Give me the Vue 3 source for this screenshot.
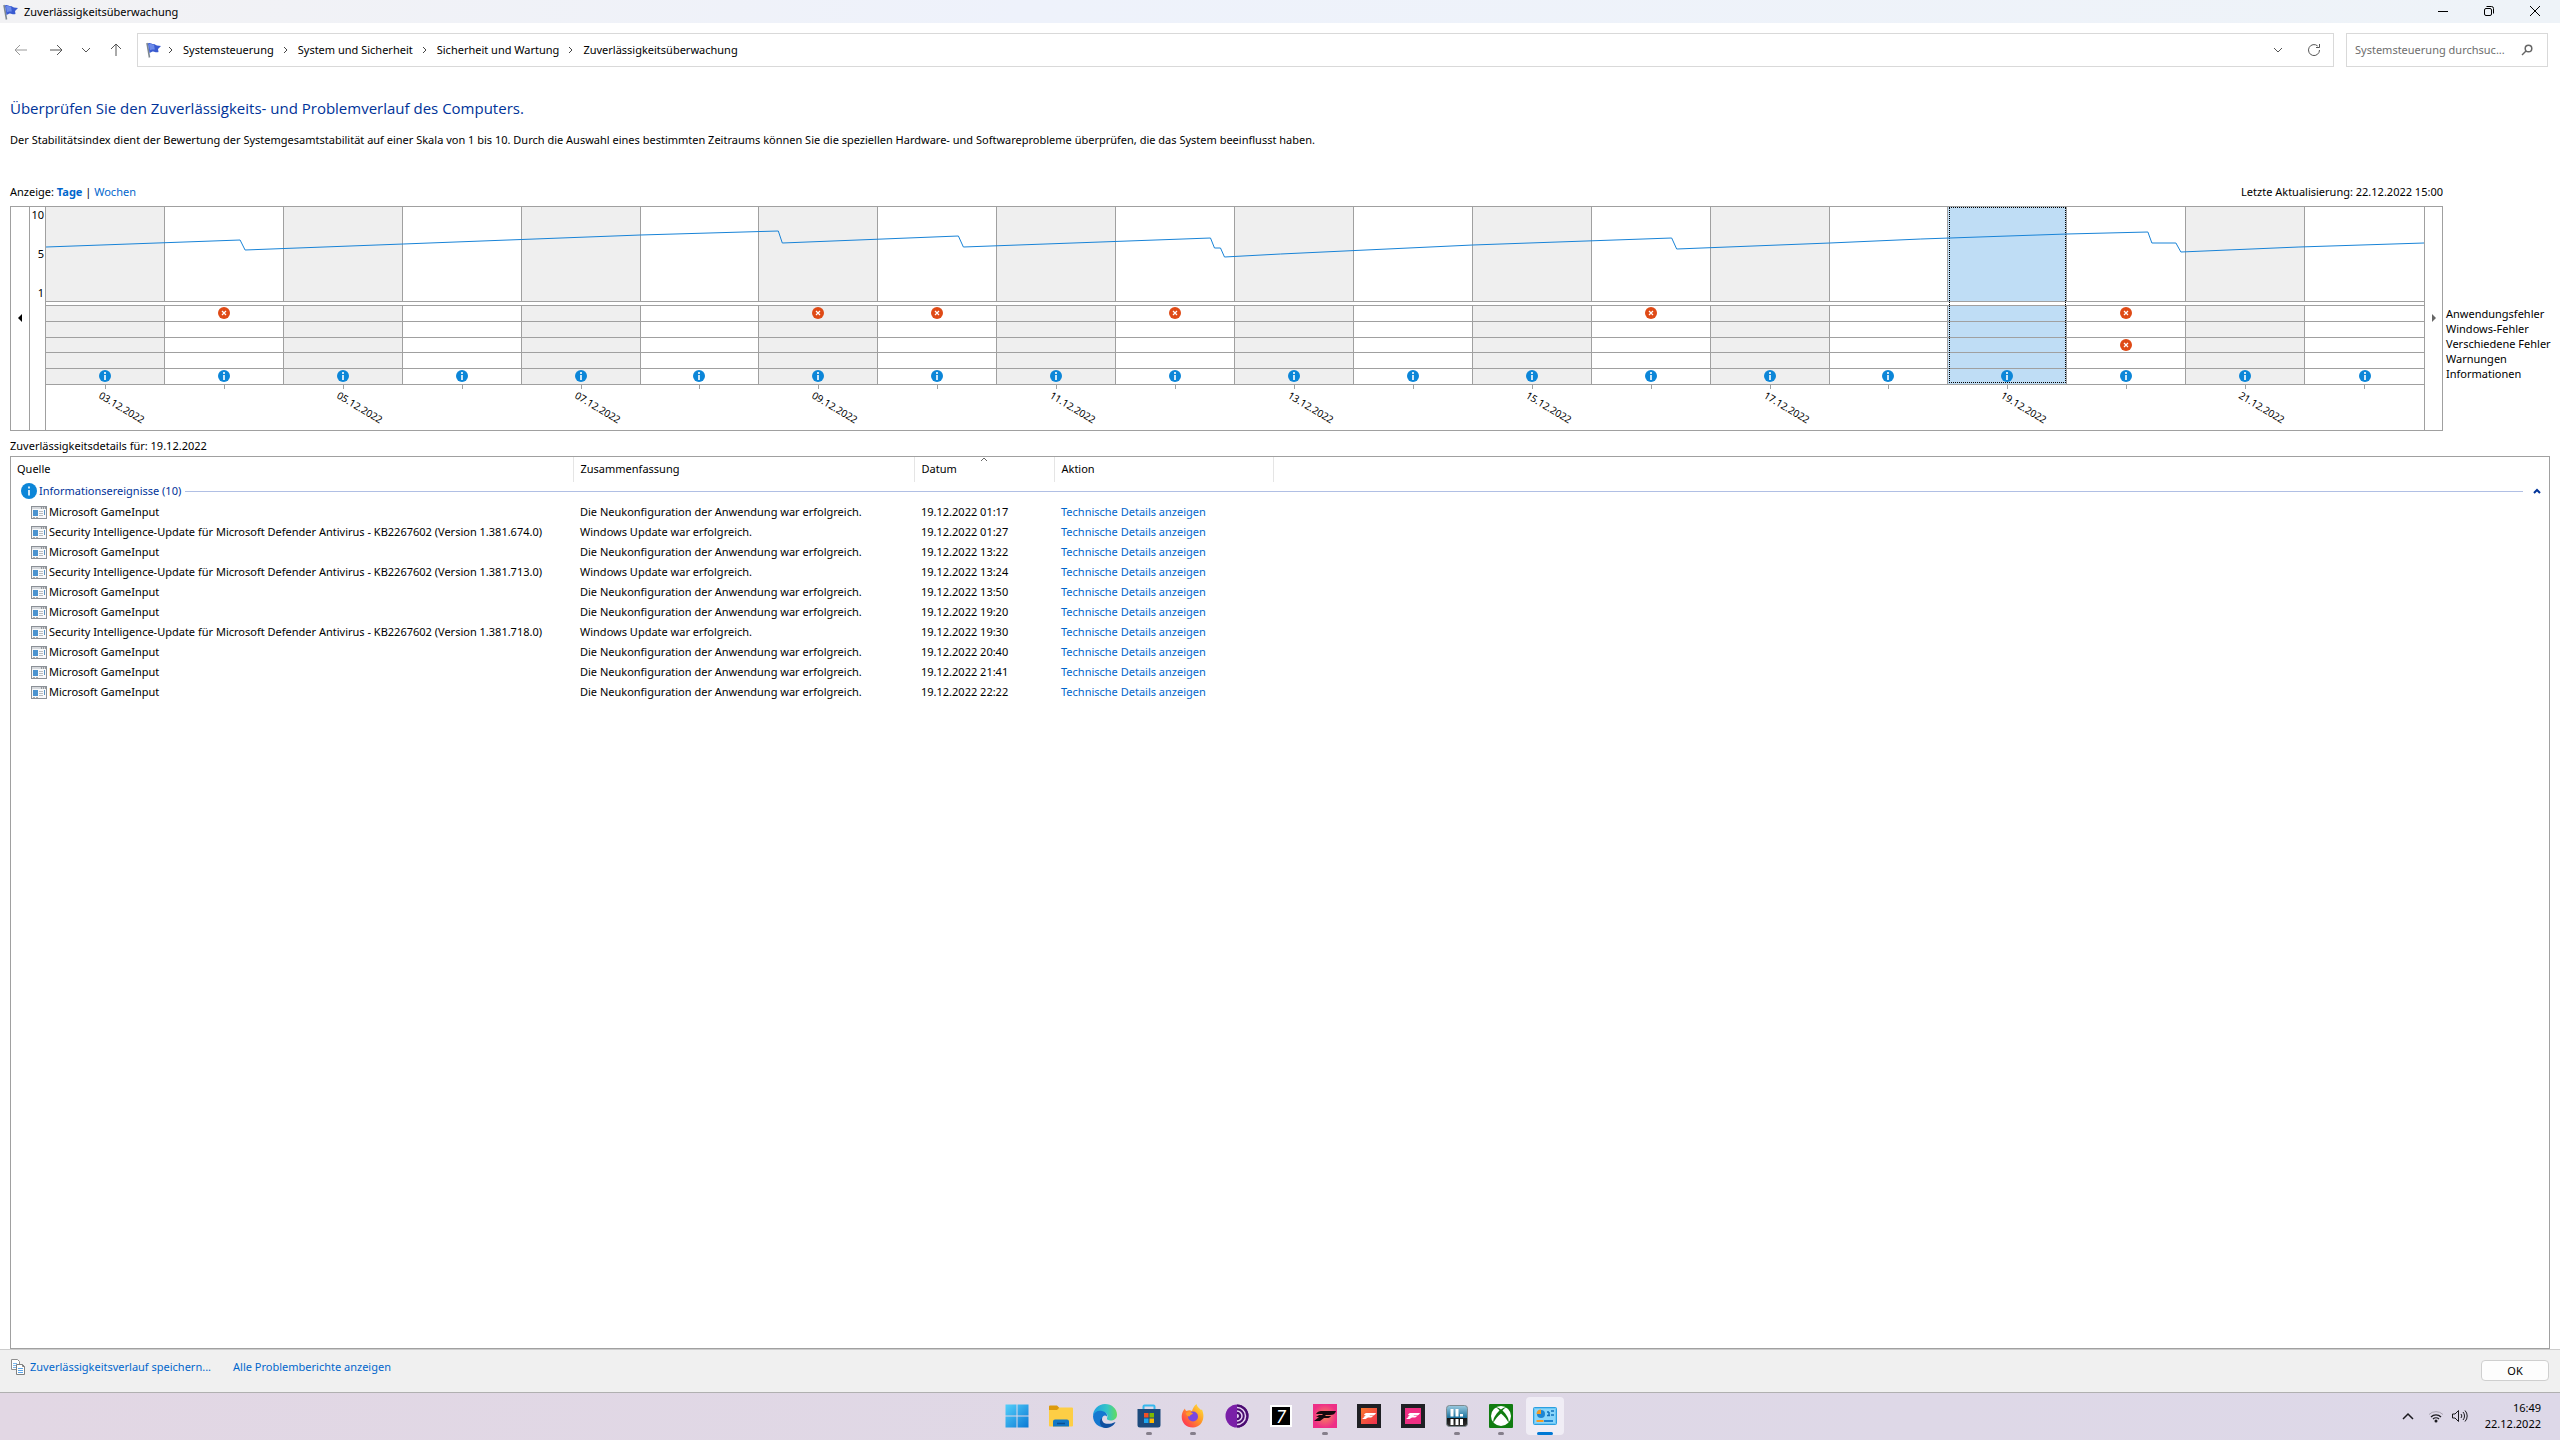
<template>
  <div class="window">
    <header class="titlebar">
      <svg class="flag" viewBox="0 0 16 16">
        <path d="M1 1l2.500 14.500" stroke="#7d8790" stroke-width="1.600" />
        <path d="M2 1.500c2-1.500 4 1 6 .5l3 1.500 4 .5-3 3 .5 3c-3 1-4-1-6-.5l-3 1.500z" fill="#3a5bd0" />
        <path d="M3 2c2-1 3 .8 5 .5l.8 5c-2 0-3-.5-5 1z" fill="#6d8bea" />
      </svg>
      <span class="title">Zuverlässigkeitsüberwachung</span>
      <div class="window-buttons">
        <button aria-label="Minimieren">
          <svg viewBox="0 0 12 12"><path d="M1 6.500h10" /></svg>
        </button>
        <button aria-label="Verkleinern">
          <svg viewBox="0 0 12 12">
            <rect x="1.500" y="3.500" width="7" height="7" rx="1.500" />
            <path d="M3.500 1.500h5a2 2 0 0 1 2 2v5" />
          </svg>
        </button>
        <button aria-label="Schließen">
          <svg viewBox="0 0 12 12"><path d="M1 1l10 10M11 1L1 11" /></svg>
        </button>
      </div>
    </header>

    <nav class="navbar">
      <button class="nav-button disabled" aria-label="Zurück">
        <svg viewBox="0 0 14 14"><path d="M13 7H1M6 2L1 7l5 5" /></svg>
      </button>
      <button class="nav-button" aria-label="Vorwärts">
        <svg viewBox="0 0 14 14"><path d="M1 7h12M8 2l5 5-5 5" /></svg>
      </button>
      <button class="nav-button small" aria-label="Zuletzt besucht">
        <svg viewBox="0 0 14 14"><path d="M3 5l4 4 4-4" /></svg>
      </button>
      <button class="nav-button" aria-label="Nach oben">
        <svg viewBox="0 0 14 14"><path d="M7 13V1M2 6l5-5 5 5" /></svg>
      </button>
      <div class="address">
        <svg class="flag" viewBox="0 0 16 16">
          <path d="M1 1l2.500 14.500" stroke="#7d8790" stroke-width="1.600" />
          <path d="M2 1.500c2-1.500 4 1 6 .5l3 1.500 4 .5-3 3 .5 3c-3 1-4-1-6-.5l-3 1.500z" fill="#3a5bd0" />
          <path d="M3 2c2-1 3 .8 5 .5l.8 5c-2 0-3-.5-5 1z" fill="#6d8bea" />
        </svg>
        <template v-for="crumb in crumbs" :key="crumb">
          <svg class="crumb-arrow" viewBox="0 0 6 8"><path d="M1 1l3 3-3 3" /></svg>
          <a href="#" class="crumb">{{ crumb }}</a>
        </template>
        <button class="nav-button small dropdown" aria-label="Vorherige Orte">
          <svg viewBox="0 0 14 14"><path d="M3 5l4 4 4-4" /></svg>
        </button>
        <button class="nav-button refresh" aria-label="Aktualisieren">
          <svg viewBox="0 0 14 14"><path d="M12.500 7a5.500 5.500 0 1 1-1.800-4M12.500 1v3.500H9" /></svg>
        </button>
      </div>
      <label class="search">
        <input type="text" placeholder="Systemsteuerung durchsuc..." aria-label="Systemsteuerung durchsuchen">
        <svg viewBox="0 0 12 12">
          <circle cx="7.500" cy="4.500" r="3.300" />
          <path d="M5 7l-4 4" />
        </svg>
      </label>
    </nav>

    <main class="content">
      <h1>Überprüfen Sie den Zuverlässigkeits- und Problemverlauf des Computers.</h1>
      <p class="description">
        Der Stabilitätsindex dient der Bewertung der Systemgesamtstabilität auf einer Skala von 1 bis 10. Durch die Auswahl eines bestimmten Zeitraums können Sie die speziellen Hardware- und Softwareprobleme überprüfen, die das System beeinflusst haben.
      </p>

      <div class="view-bar">
        <div>Anzeige: <a href="#" class="current">Tage</a> | <a href="#">Wochen</a></div>
        <div>Letzte Aktualisierung: 22.12.2022 15:00</div>
      </div>

      <div class="chart-area">
        <div class="chart">
          <button class="scroll" aria-label="Früher">
            <svg viewBox="0 0 4 8"><path d="M4 0v8L0 4z" fill="#000" /></svg>
          </button>
          <div class="scale">
            <div class="scale-values">
              <span>10</span>
              <span>5</span>
              <span>1</span>
            </div>
          </div>
          <div class="plot">
            <button
              v-for="(day, index) in days"
              :key="day.date"
              :class="['day', { shaded: index % 2 === 0, selected: selectedDate === day.date }]"
              :aria-label="day.date"
              @click="selectedDate = day.date"
            >
              <span class="index-cell"></span>
              <span class="tracks">
                <span v-for="track in tracks" :key="track" class="track">
                  <svg v-if="day.events.includes(track)" class="event" viewBox="0 0 12 12">
                    <template v-if="track === 'Informationen'">
                      <circle cx="6" cy="6" r="6" fill="#0c86d8" />
                      <path d="M6 5v5M6 2v2" stroke="#fff" stroke-width="1.600" />
                    </template>
                    <template v-else>
                      <circle cx="6" cy="6" r="6" fill="#df4a16" />
                      <path d="M4 4l4 4M8 4L4 8" stroke="#fff" stroke-width="1.200" />
                    </template>
                  </svg>
                </span>
              </span>
              <span class="date-cell">
                <span v-if="index % 2 === 0" class="date">{{ day.date }}</span>
              </span>
            </button>
            <svg class="line" viewBox="0 0 2377 94" preserveAspectRatio="none">
              <polyline :points="stability" />
            </svg>
          </div>
          <button class="scroll right" aria-label="Später">
            <svg viewBox="0 0 4 8"><path d="M0 0v8l4-4z" fill="#666" /></svg>
          </button>
        </div>
        <ul class="legend">
          <li v-for="track in tracks" :key="track">{{ track }}</li>
        </ul>
      </div>

      <p class="details-title">Zuverlässigkeitsdetails für: {{ selectedDate }}</p>
      <div class="details">
        <table>
          <colgroup>
            <col class="col-source">
            <col class="col-summary">
            <col class="col-date">
            <col class="col-action">
            <col>
          </colgroup>
          <thead>
            <tr>
              <th>Quelle</th>
              <th>Zusammenfassung</th>
              <th class="sorted">
                Datum
                <svg viewBox="0 0 8 5"><path d="M1 4l3-3 3 3" /></svg>
              </th>
              <th>Aktion</th>
              <th></th>
            </tr>
          </thead>
          <tbody>
            <tr>
              <td colspan="5" class="group-cell">
                <div class="group">
                  <svg class="group-icon" viewBox="0 0 16 16">
                    <circle cx="8" cy="8" r="8" fill="#0c86d8" />
                    <path d="M8 7v5.500M8 3.500v2" stroke="#fff" stroke-width="1.600" />
                  </svg>
                  <span>Informationsereignisse (10)</span>
                  <span class="rule"></span>
                  <button aria-label="Gruppe reduzieren">
                    <svg viewBox="0 0 8 6"><path d="M1 5l3-3 3 3" /></svg>
                  </button>
                </div>
              </td>
            </tr>
            <tr v-for="event in events" :key="event.time">
              <td>
                <div class="source">
                  <svg viewBox="0 0 16 13">
                    <rect x=".5" y=".5" width="15" height="12" fill="#f8f9fa" stroke="#8b9096" />
                    <path d="M1 2h14" stroke="#d5d8dc" stroke-width="2" />
                    <path d="M10 2h1M12 2h1M14 2h1" stroke="#555" />
                    <rect x="2" y="4" width="5" height="6" fill="#4b93cf" />
                    <path d="M8 5.500h4M8 7.500h4M8 9.500h4" stroke="#b8bcc0" />
                    <path d="M13.500 4v5" stroke="#5a93c4" />
                    <path d="M2 11.500h2M5 11.500h2" stroke="#aaa" />
                  </svg>
                  <span>{{ event.source }}</span>
                </div>
              </td>
              <td>{{ event.summary }}</td>
              <td>19.12.2022 {{ event.time }}</td>
              <td><a href="#">Technische Details anzeigen</a></td>
              <td></td>
            </tr>
          </tbody>
        </table>
      </div>
    </main>

    <footer class="footer">
      <svg class="copy" viewBox="0 0 14 16">
        <path d="M.5.5h6l2 2v8h-8z" fill="#fff" stroke="#8f8f8f" />
        <path d="M2 4.500h4M2 6.500h4M2 8.500h3" stroke="#7db8ec" />
        <path d="M5.500 5.500h6l2 2v8h-8z" fill="#fff" stroke="#808080" />
        <path d="M11.500 5.500v2h2" fill="none" stroke="#808080" />
        <path d="M7 9.500h5M7 11.500h5M7 13.500h5" stroke="#5ba5e8" />
      </svg>
      <a href="#">Zuverlässigkeitsverlauf speichern...</a>
      <a href="#" class="reports">Alle Problemberichte anzeigen</a>
      <button class="ok">OK</button>
    </footer>

    <div class="taskbar">
      <div class="apps">
        <button aria-label="Start">
          <svg viewBox="0 0 24 24">
            <defs>
              <linearGradient id="win" x1="0" y1="0" x2="1" y2="1">
                <stop offset="0" stop-color="#53d0fb" />
                <stop offset="1" stop-color="#0a78d4" />
              </linearGradient>
            </defs>
            <path d="M.5.5h11v11H.5zM12.500.5h11v11h-11zM.5 12.500h11v11H.5zM12.500 12.500h11v11h-11z" fill="url(#win)" />
          </svg>
        </button>
        <button aria-label="Explorer">
          <svg viewBox="0 0 24 24">
            <path d="M0 2.500a1 1 0 0 1 1-1h7l2.500 2.500V8H0z" fill="#dd9a0c" />
            <path d="M0 6h8l2.500-2.500H23a1 1 0 0 1 1 1v17a1 1 0 0 1-1 1H1a1 1 0 0 1-1-1z" fill="#fdce45" />
            <path d="M4 22.500v-5a2 2 0 0 1 2-2h12a2 2 0 0 1 2 2v5z" fill="#1277c5" />
            <path d="M8 19.500h8" stroke="#0a4f92" stroke-width="1.500" />
          </svg>
        </button>
        <button aria-label="Edge">
          <svg viewBox="0 0 24 24">
            <defs>
              <linearGradient id="edge" x1="0" y1="0" x2="1" y2="0">
                <stop offset="0" stop-color="#1d9fe4" />
                <stop offset=".6" stop-color="#35c6c5" />
                <stop offset="1" stop-color="#62dc5c" />
              </linearGradient>
            </defs>
            <path d="M0 12C0 5 5.500 0 12 0c7 0 12 5 12 10.500 0 4-3 6-6.500 6-2.500 0-4-1-3.500-2.500 1.500-3-.5-6-4.500-6C5 8 1.500 9 0 12z" fill="url(#edge)" />
            <path d="M0 12c1-4 5-6 9-5 4 .5 5.500 3.500 5 5.500-2-2-5-.5-5 3 0 4 3.500 7.500 7 7C8 26 0 20 0 12z" fill="#1478d0" />
            <path d="M9 14c-1 5 5 8 13.500 4-2 4-6 6-10.500 6-5-1-7-7-3-10z" fill="#104f9f" />
          </svg>
        </button>
        <button class="running" aria-label="Microsoft Store">
          <svg viewBox="0 0 24 24">
            <path d="M6.500 6V2.500a1 1 0 0 1 1-1h9a1 1 0 0 1 1 1V6" fill="none" stroke="#35b8ee" stroke-width="2" />
            <path d="M.5 5h23v16a2.500 2.500 0 0 1-2.500 2.500H3A2.500 2.500 0 0 1 .5 21z" fill="#1c4a7c" />
            <path d="M7 9h4.500v4.500H7z" fill="#f15024" />
            <path d="M12.500 9H17v4.500h-4.500z" fill="#7fba00" />
            <path d="M7 14.500h4.500V19H7z" fill="#1ba6ef" />
            <path d="M12.500 14.500H17V19h-4.500z" fill="#ffb900" />
          </svg>
        </button>
        <button class="running" aria-label="Firefox">
          <svg viewBox="0 0 24 24">
            <defs>
              <linearGradient id="fox" x1="1" y1="0" x2="0" y2="1">
                <stop offset="0" stop-color="#fff13f" />
                <stop offset=".45" stop-color="#ff9426" />
                <stop offset="1" stop-color="#ff1e5e" />
              </linearGradient>
            </defs>
            <path d="M4 4.500c0 1 .5 2 1.500 2.500 2-1 4-1 5.500 0 1-3 2-5 4.500-7 .5 3 3 4 4.500 6l1-.5C25 15 20 23.500 12 23.500S-.5 17 1 10c.5-2 1.500-4 3-5.500z" fill="url(#fox)" />
            <circle cx="12" cy="12.500" r="5" fill="#7a46e0" />
            <path d="M5 9c3-1.500 5-1 7 .5-1 1.500-3 1-3.500 3-2 0-3.500-1.500-3.500-3.500z" fill="#ff9a2a" />
          </svg>
        </button>
        <button aria-label="Tor Browser">
          <svg viewBox="0 0 24 24">
            <circle cx="12" cy="12" r="11.500" fill="#7a1fa8" />
            <path d="M12 .5a11.500 11.500 0 0 1 0 23z" fill="#4a0d70" />
            <path d="M12 3.500a8.500 8.500 0 0 1 0 17M12 7a5 5 0 0 1 0 10" fill="none" stroke="#e9d4f5" stroke-width="1.500" />
            <path d="M12 10a2 2 0 0 1 0 4z" fill="#e9d4f5" />
          </svg>
        </button>
        <button><span class="seven">7</span></button>
        <button class="running" aria-label="Forza Horizon 5">
          <svg viewBox="0 0 24 24">
            <defs>
              <radialGradient id="forza">
                <stop offset="0" stop-color="#f88a5c" />
                <stop offset="1" stop-color="#ee2f87" />
              </radialGradient>
            </defs>
            <path d="M0 0h24v24H0z" fill="url(#forza)" />
            <path d="M8 7h15c-1 3-3 4-6 4h-4l-1 1h6c-1 1.500-2 2-4 2h-3l-4 3H1l5-4H3l3-2h3l1-1H3c1-2 3-3 5-3z" fill="#16090f" />
          </svg>
        </button>
        <button aria-label="Forza Horizon 4">
          <svg viewBox="0 0 24 24">
            <defs>
              <linearGradient id="orange" x1="0" y1="0" x2="1" y2="1">
                <stop offset="0" stop-color="#f97a2c" />
                <stop offset="1" stop-color="#ee2f50" />
              </linearGradient>
            </defs>
            <path d="M0 0h24v24H0z" fill="#1f2024" />
            <path d="M4 4h16v16H4z" fill="url(#orange)" />
            <path d="M10 9h9c-1 2-2 2.500-4 2.500h-2l-.5.5H16c-1 1-1.500 1.500-3 1.500h-2L8.500 15H5l3-2.500H6.500L9 11H7c.5-1.500 1.500-2 3-2z" fill="#fff" />
          </svg>
        </button>
        <button aria-label="Forza Horizon">
          <svg viewBox="0 0 24 24">
            <path d="M0 0h24v24H0z" fill="#1f2024" />
            <path d="M4 4h16v16H4z" fill="#ef2f83" />
            <path d="M10 9h9c-1 2-2 2.500-4 2.500h-2l-.5.5H16c-1 1-1.500 1.500-3 1.500h-2L8.500 15H5l3-2.500H6.500L9 11H7c.5-1.500 1.500-2 3-2z" fill="#fff" />
          </svg>
        </button>
        <button class="running" aria-label="Leistung">
          <svg viewBox="0 0 24 24">
            <defs>
              <linearGradient id="meter" x1="0" y1="0" x2="0" y2="1">
                <stop offset="0" stop-color="#9ccbe0" />
                <stop offset=".6" stop-color="#176f9c" />
                <stop offset=".6" stop-color="#111" />
                <stop offset="1" stop-color="#333" />
              </linearGradient>
            </defs>
            <rect x="1.500" y="1.500" width="21" height="21" rx="3" fill="url(#meter)" stroke="#7e8a90" />
            <path d="M7 5v7.500M12 5v7.500M16.500 10v2.500" stroke="#fff" stroke-width="3" />
            <path d="M7 15v6M12 15v6M16.500 15v6" stroke="#fff" stroke-width="3" />
          </svg>
        </button>
        <button class="running" aria-label="Xbox">
          <svg viewBox="0 0 24 24">
            <rect width="24" height="24" rx="1" fill="#107c10" />
            <circle cx="12" cy="12" r="10" fill="#fff" />
            <path d="M6 3.500C8 2.500 10 4 12 5.500 14 4 16 2.500 18 3.500c-2 0-3.500 1.500-4.500 3 4 4 7 8.500 6 12-1.500-3-4.500-6.500-7.500-9-3 2.500-6 6-7.500 9-1-3.500 2-8 6-12-1-1.500-2.500-3-4.500-3z" fill="#107c10" />
          </svg>
        </button>
        <button class="active" aria-label="Systemsteuerung">
          <svg viewBox="0 0 24 24">
            <rect x=".5" y="3.500" width="23" height="17" rx="1" fill="#6cc6f3" stroke="#2b9fe0" />
            <path d="M2 5h20v14H2z" fill="#8ad5fa" />
            <circle cx="8" cy="10" r="4" fill="#1e86d4" />
            <path d="M8 10V5.500a4.500 4.500 0 0 0-4.500 4.500z" fill="#f59a23" />
            <path d="M14 8h2M18 7h3M14 11.500h3M18 11h3M16 8v3" stroke="#1272bd" stroke-width="1.500" />
            <path d="M3.500 17h7" stroke="#f59a23" stroke-width="2" />
            <path d="M11 17h9" stroke="#1e86d4" stroke-width="2" />
          </svg>
        </button>
      </div>
      <div class="tray">
        <button aria-label="Ausgeblendete Symbole">
          <svg viewBox="0 0 16 16"><path d="M3 11l5-5 5 5" stroke-width="1.500" /></svg>
        </button>
        <button aria-label="Netzwerk">
          <svg viewBox="0 0 16 16">
            <path d="M1 6.500a10 10 0 0 1 14 0" stroke="#a9a3b0" />
            <path d="M3 9a7 7 0 0 1 10 0M5 11a4.300 4.300 0 0 1 6 0" stroke-width="1.300" />
            <circle cx="8" cy="13" r="1.500" fill="#1b1a1f" stroke="none" />
          </svg>
        </button>
        <button aria-label="Lautstärke">
          <svg viewBox="0 0 16 16">
            <path d="M.5 6h2.500l3.500-3.500v11L3 10H.5zM9 6a3 3 0 0 1 0 4M11 4a6 6 0 0 1 0 8M13 2.500a8 8 0 0 1 0 11" />
          </svg>
        </button>
        <div class="clock">
          <span>16:49</span>
          <span>22.12.2022</span>
        </div>
      </div>
    </div>
  </div>
</template>

<script setup>
import { ref } from 'vue'

const crumbs = ['Systemsteuerung', 'System und Sicherheit', 'Sicherheit und Wartung', 'Zuverlässigkeitsüberwachung']

const tracks = ['Anwendungsfehler', 'Windows-Fehler', 'Verschiedene Fehler', 'Warnungen', 'Informationen']

// Days with errors, by day of month
const errors = {
  4: ['Anwendungsfehler'],
  9: ['Anwendungsfehler'],
  10: ['Anwendungsfehler'],
  12: ['Anwendungsfehler'],
  16: ['Anwendungsfehler'],
  20: ['Anwendungsfehler', 'Verschiedene Fehler']
}

const days = Array.from({ length: 20 }, (_, i) => {
  const day = i + 3
  return {
    date: `${String(day).padStart(2, '0')}.12.2022`,
    events: [...(errors[day] || []), 'Informationen']
  }
})

const selectedDate = ref('19.12.2022')

// Stability index curve
const stability = [
  [0, 40], [194, 33], [199, 43], [357, 37], [594, 28], [732, 24], [736, 36], [912, 29],
  [917, 40], [1164, 31], [1168, 41], [1174, 41], [1178, 50], [1234, 47], [1426, 38],
  [1625, 31], [1630, 42], [1783, 36], [1874, 32], [2020, 27], [2101, 25], [2105, 36],
  [2129, 36], [2134, 45], [2252, 40], [2377, 36]
].map(point => point.join(',')).join(' ')

const input = 'Microsoft GameInput'
const update = version => `Security Intelligence-Update für Microsoft Defender Antivirus - KB2267602 (Version ${version})`
const configured = 'Die Neukonfiguration der Anwendung war erfolgreich.'
const updated = 'Windows Update war erfolgreich.'

const events = [
  { source: input, summary: configured, time: '01:17' },
  { source: update('1.381.674.0'), summary: updated, time: '01:27' },
  { source: input, summary: configured, time: '13:22' },
  { source: update('1.381.713.0'), summary: updated, time: '13:24' },
  { source: input, summary: configured, time: '13:50' },
  { source: input, summary: configured, time: '19:20' },
  { source: update('1.381.718.0'), summary: updated, time: '19:30' },
  { source: input, summary: configured, time: '20:40' },
  { source: input, summary: configured, time: '21:41' },
  { source: input, summary: configured, time: '22:22' }
]
</script>

<style>
body {
  margin: 0;
  background: #fff;
}
</style>

<style scoped>
.window {
  display: flex;
  flex-direction: column;
  min-height: 100vh;
  font-family: "Noto Sans", "Open Sans", sans-serif;
  font-size: 11px;
  line-height: 16px;
  color: #000;
}

button {
  padding: 0;
  border: none;
  background: none;
  font: inherit;
  color: inherit;
}

svg {
  display: block;
  flex: none;
}

a {
  color: #0066cc;
  text-decoration: none;
}

.flag {
  width: 16px;
  height: 16px;
}

/* Title bar */
.titlebar {
  display: flex;
  align-items: center;
  height: 23px;
  padding: 0 2px 0 3px;
  background: linear-gradient(90deg, #f2f2f4, #eef2fb 40%, #eef3f8);
}

.title {
  margin-left: 5px;
}

.window-buttons {
  display: flex;
  margin-left: auto;
}

.window-buttons button {
  display: flex;
  justify-content: center;
  width: 46px;
  padding-bottom: 2px;
}

.window-buttons svg {
  width: 12px;
  height: 12px;
  fill: none;
  stroke: #000;
}

/* Navigation */
.navbar {
  display: flex;
  align-items: center;
  height: 54px;
  padding: 0 12px 0 5px;
}

.nav-button {
  display: flex;
  justify-content: center;
  width: 32px;
}

.nav-button:nth-child(2) {
  margin-left: 3px;
}

.nav-button svg {
  width: 14px;
  height: 14px;
  fill: none;
  stroke: #555;
}

.nav-button.disabled svg {
  stroke: #999;
}

.nav-button.small {
  width: 28px;
}

.address {
  display: flex;
  flex: 1;
  align-items: center;
  height: 32px;
  margin-left: 5px;
  padding: 0 3px 0 8px;
  border: 1px solid #d9d9d9;
}

.crumb-arrow {
  width: 6px;
  height: 8px;
  margin: 0 9px 0 6px;
  fill: none;
  stroke: #444;
}

.crumb {
  margin-right: 3px;
  color: #000;
}

.dropdown {
  margin-left: auto;
}

.refresh {
  margin-left: 6px;
}

.search {
  display: flex;
  align-items: center;
  width: 178px;
  height: 32px;
  margin-left: 12px;
  padding: 0 14px 0 8px;
  border: 1px solid #d9d9d9;
}

.search input {
  flex: 1;
  min-width: 0;
  padding: 0;
  border: none;
  outline: none;
  font: inherit;
}

.search input::placeholder {
  color: #6d6d6d;
  opacity: 1;
}

.search svg {
  width: 12px;
  height: 12px;
  fill: none;
  stroke: #666;
  stroke-width: 1.5;
}

/* Content */
.content {
  display: flex;
  flex: 1;
  flex-direction: column;
  padding: 19px 10px 0;
}

h1 {
  margin: 0;
  font-family: "Open Sans", "Noto Sans", sans-serif;
  font-size: 15px;
  font-weight: 400;
  line-height: 24px;
  color: #003399;
}

.description {
  margin: 12px 0 0;
}

.view-bar {
  display: flex;
  justify-content: space-between;
  margin: 36px 107px 6px 0;
}

.current {
  font-weight: 700;
}

/* Chart */
.chart-area {
  display: grid;
  grid-template-columns: 1fr 104px;
  gap: 3px;
}

.chart {
  display: flex;
  height: 223px;
  border: 1px solid #a0a0a0;
}

.scroll {
  display: flex;
  align-items: center;
  justify-content: center;
  width: 18px;
  padding-bottom: 2px;
}

.scroll svg {
  width: 4px;
  height: 8px;
}

.scroll.right {
  border-left: 1px solid #a0a0a0;
}

.scale {
  width: 14px;
  padding-right: 1px;
  border-left: 1px solid #a0a0a0;
  text-align: right;
}

.scale-values {
  display: flex;
  flex-direction: column;
  justify-content: space-between;
  height: 94px;
}

.plot {
  position: relative;
  display: grid;
  flex: 1;
  grid-template-columns: repeat(20, 1fr);
  border-left: 1px solid #a0a0a0;
}

.day {
  position: relative;
  display: flex;
  flex-direction: column;
}

.index-cell,
.tracks {
  display: block;
  box-sizing: border-box;
  width: 100%;
  border-right: 1px solid #a0a0a0;
  border-bottom: 1px solid #a0a0a0;
}

.day:nth-child(20) .index-cell,
.day:nth-child(20) .tracks {
  border-right: none;
}

.index-cell {
  height: 95px;
}

.tracks {
  display: grid;
  grid-template-rows: repeat(5, 1fr);
  height: 80px;
  margin-top: 3px;
}

.track {
  display: flex;
  align-items: flex-start;
  justify-content: center;
  border-top: 1px solid #a0a0a0;
}

.event {
  width: 12px;
  height: 12px;
  margin-top: 1px;
}

.shaded .index-cell,
.shaded .tracks {
  background: #efefef;
}

.selected .index-cell,
.selected .tracks {
  background: #bfddf5;
}

.selected::after {
  content: "";
  position: absolute;
  inset: 0 1px 47px 1px;
  border: 1px dotted #000;
}

.date-cell {
  position: relative;
  width: 1px;
  height: 4px;
  margin: 0 auto;
  background: #a0a0a0;
}

.date {
  position: absolute;
  top: 3px;
  left: -5px;
  font-size: 10px;
  line-height: 12px;
  transform: rotate(31deg);
  transform-origin: 0 50%;
}

.line {
  position: absolute;
  top: 0;
  left: 0;
  width: 100%;
  height: 94px;
  pointer-events: none;
}

.line polyline {
  fill: none;
  stroke: #1883d7;
  vector-effect: non-scaling-stroke;
}

.legend {
  margin: 100px 0 0;
  padding: 0;
  line-height: 15px;
  list-style: none;
  white-space: nowrap;
}

/* Details */
.details-title {
  margin: 7px 0 2px;
}

.details {
  flex: 1;
  border: 1px solid #a0a0a0;
}

table {
  width: 100%;
  table-layout: fixed;
  border-collapse: collapse;
}

.col-source {
  width: 562px;
}

.col-summary {
  width: 341px;
}

.col-date {
  width: 140px;
}

.col-action {
  width: 219px;
}

th {
  height: 23px;
  padding: 0 0 2px 7px;
  border-right: 1px solid #e5e5e5;
  font-weight: 400;
  text-align: left;
}

th:first-child {
  padding-left: 6px;
}

th:last-child {
  border-right: none;
}

.sorted {
  position: relative;
}

.sorted svg {
  position: absolute;
  top: 0;
  left: calc(50% - 4px);
  width: 8px;
  height: 5px;
  fill: none;
  stroke: #666;
}

td {
  height: 20px;
  padding: 0 0 0 7px;
  white-space: nowrap;
}

.group-cell {
  padding: 0 8px 0 10px;
}

.group {
  display: flex;
  align-items: center;
  padding-bottom: 2px;
  color: #003399;
}

.group-icon {
  width: 16px;
  height: 16px;
  margin-right: 2px;
}

.rule {
  flex: 1;
  height: 1px;
  margin: 0 10px 0 4px;
  background: #b0bfe4;
}

.group button svg {
  width: 8px;
  height: 6px;
  fill: none;
  stroke: #003399;
  stroke-width: 2;
}

.source {
  display: flex;
  align-items: center;
  gap: 2px;
  padding-left: 13px;
}

.source svg {
  width: 16px;
  height: 13px;
}

/* Footer */
.footer {
  display: flex;
  align-items: flex-start;
  height: 33px;
  padding: 9px 11px 0;
  border-top: 1px solid #cccccc;
  border-bottom: 1px solid #b0b0b0;
  background: #f0f0f0;
}

.copy {
  width: 14px;
  height: 16px;
  margin-right: 5px;
}

.reports {
  margin-left: 22px;
}

.ok {
  width: 68px;
  height: 21px;
  margin: 1px 0 0 auto;
  border: 1px solid #cfcfcf;
  border-radius: 4px;
  background: #fdfdfd;
}

/* Taskbar */
.taskbar {
  display: grid;
  grid-template-columns: 1fr auto 1fr;
  align-items: center;
  height: 47px;
  background: linear-gradient(90deg, #e2d7e4, #dfd8e6 50%, #ddd8e8);
}

.apps {
  display: flex;
  grid-column: 2;
  gap: 6px;
  padding: 0 0 1px 2px;
}

.apps button {
  position: relative;
  display: flex;
  align-items: center;
  justify-content: center;
  width: 38px;
  height: 38px;
  border-radius: 4px;
}

.apps svg {
  width: 24px;
  height: 24px;
}

.seven {
  width: 18px;
  height: 18px;
  border: 2px solid #fff;
  background: #000;
  color: #fff;
  font-size: 18px;
  font-style: italic;
  line-height: 18px;
  text-align: center;
}

.apps .active {
  background: #f0edf5;
}

.running::after,
.active::after {
  content: "";
  position: absolute;
  bottom: 0;
  width: 6px;
  height: 3px;
  border-radius: 2px;
  background: #857f8b;
}

.active::after {
  width: 16px;
  background: #0078d4;
}

.tray {
  display: flex;
  align-items: center;
  justify-content: flex-end;
  gap: 8px;
  padding: 0 19px 2px 0;
}

.tray button:first-child {
  margin-right: 4px;
}

.tray svg {
  width: 16px;
  height: 16px;
  fill: none;
  stroke: #1b1a1f;
}

.clock {
  display: flex;
  flex-direction: column;
  width: 65px;
  text-align: right;
}
</style>
